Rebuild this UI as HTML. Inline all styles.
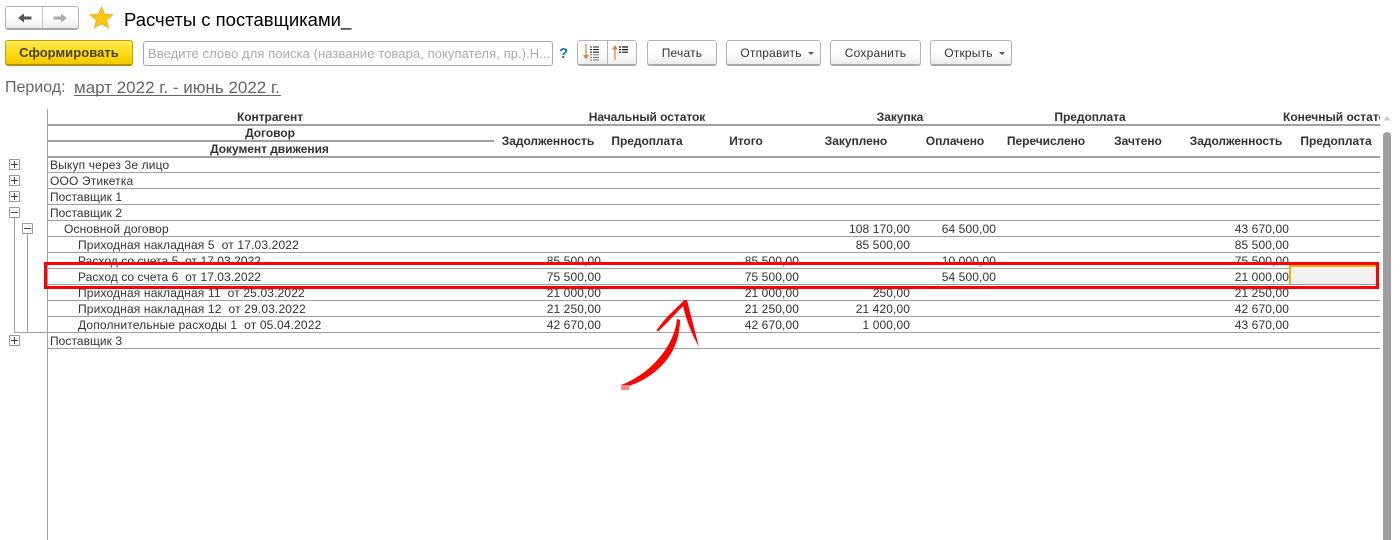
<!DOCTYPE html>
<html lang="ru"><head><meta charset="utf-8"><title>Расчеты с поставщиками</title>
<style>
html,body{margin:0;padding:0;background:#fff}
#p{position:relative;width:1400px;height:540px;overflow:hidden;background:#fff;font:12px/16px "Liberation Sans",Arial,sans-serif;color:#333}
#p div{position:absolute;white-space:nowrap}
.btn{box-sizing:border-box;height:26px;top:40px;border:1px solid #b4b4b4;border-bottom:2px solid #a8a8a8;border-radius:3px;background:linear-gradient(#fff 0%,#fff 50%,#ebebeb 100%);text-align:center;line-height:25px;color:#333;font-size:12px;letter-spacing:.2px}
.caret{display:inline-block;width:0;height:0;border:3px solid transparent;border-top:3px solid #555;border-bottom:0;margin-left:6px;vertical-align:2px}
.l{left:48px;width:1332px;height:1px;background:#a0a0a0}
.hl{height:2px;background:#a0a0a0}
.h{font-weight:bold;color:#333;text-align:center;width:200px;font-size:12px;letter-spacing:-.05px}
.c{width:100px;text-align:right;margin-top:1px;letter-spacing:.1px}
.r{margin-top:1px;letter-spacing:.15px}
.x{box-sizing:border-box;width:11px;height:11px;border:1px solid #999;border-radius:1px;background:#fff}
.x::before{content:"";position:absolute;left:1px;top:4px;width:7px;height:1px;background:#444}
.pl::after{content:"";position:absolute;left:4px;top:1px;width:1px;height:7px;background:#444}
</style></head><body><div id="p">

<div style="left:5px;top:6px;width:74px;height:24px;box-sizing:border-box;border:1px solid #b4b4b4;border-bottom:2px solid #a8a8a8;border-radius:3px;background:linear-gradient(#fff 0%,#fff 50%,#ebebeb 100%)"></div>
<div style="left:42px;top:7px;width:1px;height:21px;background:#c8c8c8"></div>
<svg style="position:absolute;left:17px;top:12px" width="16" height="12"><path d="M1 6 L7 1.5 V4.5 H14.5 V7.5 H7 V10.5 Z" fill="#555"/></svg>
<svg style="position:absolute;left:52px;top:12px" width="16" height="12"><path d="M15 6 L9 1.5 V4.5 H1.5 V7.5 H9 V10.5 Z" fill="#aaa"/></svg>
<svg style="position:absolute;left:89px;top:6px" width="25" height="24"><path d="M12.5 1 L15.6 8.2 L24 8.8 L17.6 14 L19.6 22 L12.5 17.8 L5.4 22 L7.4 14 L1 8.8 L9.4 8.2 Z" fill="#fdc515" stroke="#e8a90a" stroke-width=".7"/></svg>
<div style="left:124px;top:8px;font-size:18.5px;line-height:24px;color:#000">Расчеты с поставщиками_</div>

<div style="left:5px;top:40px;width:128px;height:26px;box-sizing:border-box;border:1px solid #c4a000;border-bottom:2px solid #b39200;border-radius:3px;background:linear-gradient(#fdeb5b 0%,#fcdd12 50%,#f3c800 100%);text-align:center;line-height:24px;font-weight:bold;font-size:13px;letter-spacing:.05px;color:#4a4020">Сформировать</div>
<div style="left:143px;top:41px;width:410px;height:25px;box-sizing:border-box;border:1px solid #aaa;border-radius:3px;background:#fff;padding-left:4px;line-height:23px;color:#aaa;font-size:13px;letter-spacing:.08px">Введите слово для поиска (название товара, покупателя, пр.).Н...</div>
<div style="left:559px;top:46px;font-weight:bold;color:#1a78b8;font-size:15px">?</div>

<div class="btn" style="left:577px;width:60px"></div>
<div style="left:607px;top:41px;width:1px;height:23px;background:#b4b4b4"></div>
<svg style="position:absolute;left:578px;top:41px" width="58" height="24">
<path d="M8 3 V15" stroke="#e9804a" stroke-width="1.3" fill="none"/><path d="M5 14 H11 L8 18.5 Z" fill="#e9804a"/>
<path d="M12 6 H14 M15 6 H21 M12 8.6 H14 M15 8.6 H21 M12 11.2 H14 M15 11.2 H21" stroke="#222" stroke-width="1.1" fill="none"/>
<path d="M12 13.8 H14 M15 13.8 H21 M12 16.4 H14 M15 16.4 H21 M12 19 H14 M15 19 H21" stroke="#777" stroke-width="1" fill="none"/>
<path d="M37 7 V19" stroke="#e9804a" stroke-width="1.3" fill="none"/><path d="M34 8.5 H40 L37 4 Z" fill="#e9804a"/>
<path d="M41 6 H43 M44 6 H50 M41 8.6 H43 M44 8.6 H50 M41 11.2 H43 M44 11.2 H50" stroke="#111" stroke-width="1.2" fill="none"/>
</svg>

<div class="btn" style="left:647px;width:70px">Печать</div>
<div class="btn" style="left:726px;width:95px;padding-left:7px">Отправить<span class="caret"></span></div>
<div class="btn" style="left:830px;width:91px">Сохранить</div>
<div class="btn" style="left:930px;width:82px;padding-left:7px">Открыть<span class="caret"></span></div>

<div style="left:5px;top:78px;font-size:16px;line-height:20px;color:#666">Период:</div>
<div style="left:74px;top:78px;font-size:17px;line-height:20px;color:#666">март 2022 г. - июнь 2022 г.</div>
<div style="left:74px;top:95px;width:207px;height:1px;background:#666"></div>

<div style="left:47px;top:109px;width:1px;height:431px;background:#a0a0a0"></div>
<div class="hl" style="left:48px;top:124px;width:1332px"></div>
<div class="hl" style="left:48px;top:140px;width:446px"></div>
<div class="hl" style="left:48px;top:156px;width:1332px"></div>

<div class="h" style="left:170px;top:109px">Контрагент</div>
<div class="h" style="left:170px;top:125px">Договор</div>
<div class="h" style="left:169.5px;top:141px">Документ движения</div>
<div class="h" style="left:547px;top:109px">Начальный остаток</div>
<div class="h" style="left:800px;top:109px">Закупка</div>
<div class="h" style="left:990px;top:109px">Предоплата</div>
<div style="left:1283px;top:109px;width:97px;overflow:hidden;font-weight:bold">Конечный остаток</div>
<div class="h" style="left:448px;top:133px">Задолженность</div>
<div class="h" style="left:547px;top:133px">Предоплата</div>
<div class="h" style="left:646px;top:133px">Итого</div>
<div class="h" style="left:756px;top:133px">Закуплено</div>
<div class="h" style="left:855px;top:133px">Оплачено</div>
<div class="h" style="left:946px;top:133px">Перечислено</div>
<div class="h" style="left:1038px;top:133px">Зачтено</div>
<div class="h" style="left:1136px;top:133px">Задолженность</div>
<div class="h" style="left:1236px;top:133px">Предоплата</div>

<div class="l" style="top:172px"></div><div class="l" style="top:188px"></div><div class="l" style="top:204px"></div><div class="l" style="top:220px"></div><div class="l" style="top:236px"></div><div class="l" style="top:252px"></div><div class="l" style="top:268px"></div><div class="l" style="top:284px"></div><div class="l" style="top:300px"></div><div class="l" style="top:316px"></div><div class="l" style="top:332px"></div><div class="l" style="top:348px"></div>

<div style="left:14px;top:217px;width:1px;height:116px;background:#a0a0a0"></div>
<div style="left:27px;top:234px;width:1px;height:98px;background:#a0a0a0"></div>
<div style="left:14px;top:332px;width:34px;height:1px;background:#a0a0a0"></div>
<div class="x pl" style="left:9px;top:159px"></div>
<div class="x pl" style="left:9px;top:175px"></div>
<div class="x pl" style="left:9px;top:191px"></div>
<div class="x" style="left:9px;top:207px"></div>
<div class="x" style="left:22px;top:223px"></div>
<div class="x pl" style="left:9px;top:335px"></div>

<div class="r" style="left:50px;top:156px">Выкуп через 3е лицо</div>
<div class="r" style="left:50px;top:172px">ООО Этикетка</div>
<div class="r" style="left:50px;top:188px;letter-spacing:.05px">Поставщик 1</div>
<div class="r" style="left:50px;top:204px;letter-spacing:.05px">Поставщик 2</div>
<div class="r" style="left:64px;top:220px">Основной договор</div>
<div class="r" style="left:78px;top:236px">Приходная накладная 5&nbsp; от 17.03.2022</div>
<div class="r" style="left:78px;top:252px;letter-spacing:.05px">Расход со счета 5&nbsp; от 17.03.2022</div>
<div class="r" style="left:78px;top:268px;letter-spacing:.05px">Расход со счета 6&nbsp; от 17.03.2022</div>
<div class="r" style="left:78px;top:284px">Приходная накладная 11&nbsp; от 25.03.2022</div>
<div class="r" style="left:78px;top:300px">Приходная накладная 12&nbsp; от 29.03.2022</div>
<div class="r" style="left:78px;top:316px">Дополнительные расходы 1&nbsp; от 05.04.2022</div>
<div class="r" style="left:50px;top:332px;letter-spacing:.05px">Поставщик 3</div>

<div class="c" style="left:810px;top:220px">108 170,00</div>
<div class="c" style="left:896px;top:220px">64 500,00</div>
<div class="c" style="left:1189px;top:220px">43 670,00</div>
<div class="c" style="left:810px;top:236px">85 500,00</div>
<div class="c" style="left:1189px;top:236px">85 500,00</div>
<div class="c" style="left:501px;top:252px">85 500,00</div>
<div class="c" style="left:699px;top:252px">85 500,00</div>
<div class="c" style="left:896px;top:252px">10 000,00</div>
<div class="c" style="left:1189px;top:252px">75 500,00</div>
<div class="c" style="left:501px;top:268px">75 500,00</div>
<div class="c" style="left:699px;top:268px">75 500,00</div>
<div class="c" style="left:896px;top:268px">54 500,00</div>
<div class="c" style="left:1189px;top:268px">21 000,00</div>
<div class="c" style="left:501px;top:284px">21 000,00</div>
<div class="c" style="left:699px;top:284px">21 000,00</div>
<div class="c" style="left:810px;top:284px">250,00</div>
<div class="c" style="left:1189px;top:284px">21 250,00</div>
<div class="c" style="left:501px;top:300px">21 250,00</div>
<div class="c" style="left:699px;top:300px">21 250,00</div>
<div class="c" style="left:810px;top:300px">21 420,00</div>
<div class="c" style="left:1189px;top:300px">42 670,00</div>
<div class="c" style="left:501px;top:316px">42 670,00</div>
<div class="c" style="left:699px;top:316px">42 670,00</div>
<div class="c" style="left:810px;top:316px">1 000,00</div>
<div class="c" style="left:1189px;top:316px">43 670,00</div>

<div style="left:1289px;top:265px;width:90px;height:19px;box-sizing:border-box;background:#f0f0f0;border-left:2px solid #f0b400;border-top:2px solid #f0b400"></div>
<div style="left:44px;top:262px;width:1335px;height:27px;box-sizing:border-box;border:3px solid #f00"></div>

<svg style="position:absolute;left:600px;top:280px" width="120" height="120">
<path d="M77 39 C75 62 55 92 21 105 L26 107 C55 98 80 75 80 40 Z" fill="#f00"/>
<path d="M84.5 20 L68 36 Q60 45 56.5 50.5 L58 51.5 Q64 46 71 38.5 L83 26 Q88 48 99 67 Q92 40 87 20 Z" fill="#f00"/>
<rect x="21" y="105" width="8" height="5" fill="#f88"/>
</svg>

<svg style="position:absolute;left:1383px;top:115px" width="8" height="6"><path d="M4 1 L7.5 5.5 H.5 Z" fill="#c8c8c8"/></svg>
<div style="left:1383px;top:132px;width:8px;height:408px;background:#9f9f9f;border-radius:4px 4px 0 0"></div>

</div></body></html>
